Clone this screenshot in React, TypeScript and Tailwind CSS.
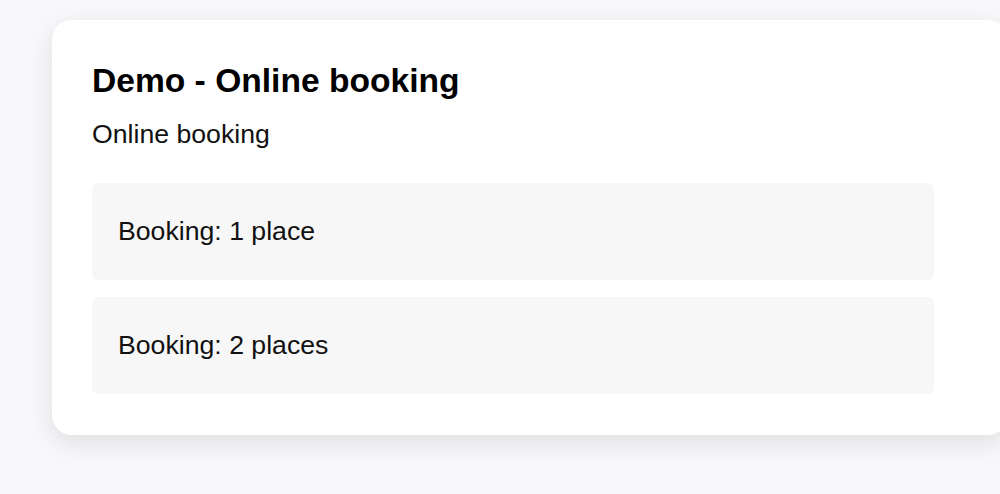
import React from 'react';

const bookings = ['Booking: 1 place', 'Booking: 2 places'];

const App: React.FC = () => {
  return (
    <div className="min-h-[494px] w-full overflow-hidden bg-[#f8f8fa] pt-5 pl-[52px] font-['Liberation_Sans',Arial,sans-serif] text-[#111]">
      <div className="w-[956px] rounded-[20px] bg-white pt-[42px] pb-[41px] pl-10 shadow-[0_8px_26px_rgba(0,0,0,0.1)]">
        <h1 className="text-[33.6px] font-bold leading-[38px] text-black">Demo - Online booking</h1>
        <p className="mt-[19px] text-[26.67px] leading-[31px]">Online booking</p>
        <div className="mt-[33px] flex w-[842px] flex-col gap-[17px]">
          {bookings.map((label) => (
            <div
              key={label}
              className="flex h-[97px] items-center rounded-md bg-[#f7f7f7] px-[26px] text-[26.67px] leading-[31px]"
            >
              {label}
            </div>
          ))}
        </div>
      </div>
    </div>
  );
};

export default App;
